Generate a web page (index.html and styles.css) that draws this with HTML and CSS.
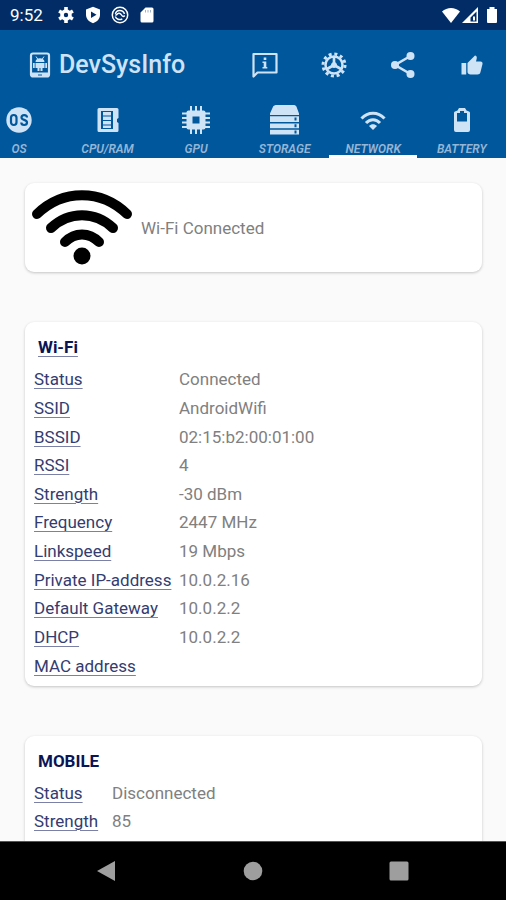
FILE: index.html
```html
<!DOCTYPE html>
<html lang="en">
<head>
<meta charset="utf-8">
<meta name="viewport" content="width=device-width, initial-scale=1">
<title>DevSysInfo</title>
<link rel="stylesheet" href="styles.css">
</head>
<body>
<div class="status-bar">
  <span class="clock">9:52</span>
  <div class="status-icons">
    <svg viewBox="0 0 18 18" width="18" height="18"><g fill="none" stroke="#fff"><circle cx="9" cy="9" r="4" stroke-width="3.6"/><path d="M9 1v3M9 14v3M2.1 5l2.6 1.5M13.3 11.5l2.6 1.5M2.1 13l2.6-1.5M13.3 6.500l2.6-1.5" stroke-width="3.6"/></g></svg>
    <svg viewBox="0 0 18 18" width="18" height="18"><path fill="#fff" d="M9 .8l7 2.700v5.300c0 4-2.800 7-7 8.500-4.200-1.500-7-4.500-7-8.500V3.500z"/><path fill="#012c66" d="M7 5.500l5.500 3.200L7 12z"/></svg>
    <svg viewBox="0 0 18 18" width="18" height="18" fill="none" stroke="#fff"><circle cx="9" cy="9" r="7.700" stroke-width="1.500"/><path d="M4.500 8C5 3.500 12 3 13.500 8M4.300 10.500c1 2.500 4 4 7 2.300M6 8.500c1-2 3.500-1.500 4.500.5s2.500 1.500 3.200.5M6 8.500c-.8.800-1.200.5-1.500 0" stroke-width="1.500"/></svg>
    <svg viewBox="0 0 18 18" width="18" height="18"><path fill="#fff" d="M7.500 1.500H14A1.500 1.500 0 0115.500 3v12a1.500 1.500 0 01-1.500 1.500H4A1.500 1.500 0 012.500 15V6.500z"/><path d="M7.500 4v2.500M10 4v2.500M12.500 4v2.500" stroke="#9fb2cc"/></svg>
  </div>
  <div class="signal-icons">
    <svg viewBox="0 0 20 18" width="20" height="18"><path fill="#fff" d="M1 5.500C6 .8 14 .8 19 5.500L10 17z"/></svg>
    <svg viewBox="0 0 18 18" width="18" height="18"><path fill="#fff" fill-rule="evenodd" d="M17 1v16H1zM15.500 5.500L9.500 11.500v4h6z"/><path fill="#fff" d="M12 10.500h2v4h-2z"/></svg>
    <svg viewBox="0 0 14 18" width="14" height="18"><path fill="#fff" d="M4.500 1h5v2H12v13a1 1 0 01-1 1H3a1 1 0 01-1-1V3h2.500z"/></svg>
  </div>
</div>
<header class="toolbar">
  <svg class="logo" viewBox="0 0 22 26" width="22" height="26"><rect x="2" y="1.500" width="18" height="23" rx="2" fill="none" stroke="#cfe3f7" stroke-width="2.200"/><path fill="#cfe3f7" d="M2 20.500h18V25H2zM6.500 10c0-5 9-5 9 0zM6.500 11h9v5h-2v3h-2v-3h-1v3h-2v-3h-2zM4 11h1.700v5H4zM16.300 11H18v5h-1.700z"/><path d="M7 4.500l2 3M15 4.500l-2 3" stroke="#cfe3f7"/><path d="M9 23h4" stroke="#01579b"/></svg>
  <h1 class="title">DevSysInfo</h1>
  <div class="actions">
    <button type="button" aria-label="Information"><svg viewBox="0 0 28 28" width="28" height="28"><path fill="none" stroke="#cfe3f7" stroke-width="2.200" stroke-linejoin="round" d="M2.500 3h23v18.500h-19l-4 4z"/><path fill="#cfe3f7" d="M12.700 6.500h2.600V9h-2.600zM11.500 10.500h3.800v5.500h1v1.500h-4.800V16h1.200v-4h-1.200z"/></svg></button>
    <button type="button" aria-label="Settings"><svg viewBox="0 0 28 28" width="28" height="28" fill="none" stroke="#cfe3f7"><circle cx="14" cy="14" r="11" stroke-width="3" stroke-dasharray="3 2.760"/><circle cx="14" cy="14" r="8.500" stroke-width="2.500"/><circle cx="14" cy="14" r="2.500" fill="#cfe3f7"/><path stroke-width="2.600" d="M14 14V6M14 14l-7 4M14 14l7 4"/></svg></button>
    <button type="button" aria-label="Share"><svg viewBox="0 0 28 28" width="28" height="28"><path fill="none" stroke="#cfe3f7" stroke-width="2.600" d="M21.500 5L6 14l15.500 9"/><g fill="#cfe3f7"><circle cx="21.500" cy="5" r="4"/><circle cx="6" cy="14" r="4"/><circle cx="21.500" cy="23" r="4"/></g></svg></button>
    <button type="button" aria-label="Like"><svg viewBox="0 0 28 28" width="28" height="28"><path fill="#cfe3f7" d="M3.500 12h4.700v11.500H3.500zM9.500 12l7.500-7.500c2.500.5 2 2.500 1 6h4.500c1.500 0 2.300 1.300 2 2.500L22.500 21c-.5 1.800-1.500 2.500-3 2.500h-7c-1.500 0-3-1-3-2.500z"/></svg></button>
  </div>
</header>
<nav class="tabs">
  <a class="tab" href="#os"><svg viewBox="0 0 32 32" width="32" height="32"><circle cx="16" cy="16" r="12.700" fill="#cfe3f7"/><g fill="none" stroke="#01579b" stroke-width="2.200"><rect x="8" y="11" width="5.500" height="10" rx="2.700"/><path d="M24 13.500c0-3.300-5.500-3.300-5.500 0 0 3 5.500 1.800 5.500 5 0 3.300-5.700 3.300-5.700 0"/></g></svg>OS</a>
  <a class="tab" href="#cpu"><svg viewBox="0 0 32 32" width="32" height="32"><path fill="#cfe3f7" fill-rule="evenodd" d="M7 4h18a1.500 1.500 0 011.500 1.500V14l-1.500 1v3l1.500 1v7.500A1.500 1.500 0 0125 28H7a1.500 1.500 0 01-1.500-1.500v-21A1.500 1.500 0 017 4zM9 7v18h12V7z"/><path fill="#cfe3f7" d="M11 8h8v3.500h-8zM11 12.500h8V16h-8zM11 17h8v3.500h-8zM11 21.500h8V24h-8z"/></svg>CPU/RAM</a>
  <a class="tab" href="#gpu"><svg viewBox="0 0 32 32" width="32" height="32"><path fill="none" stroke="#cfe3f7" stroke-width="2" d="M11 2v28M16 2v28M21 2v28M2 9.500h28M2 14h28M2 18.500h28M2 23h28"/><rect x="6.500" y="6.500" width="19" height="19" rx="2" fill="#cfe3f7"/><path fill="#01579b" d="M12.500 12.500h7v7h-7z"/></svg>GPU</a>
  <a class="tab" href="#storage"><svg viewBox="0 0 32 32" width="32" height="32"><path fill="#cfe3f7" d="M8 1h16c2 0 3 .5 3.600 2L30 9.500V11H1V9.500L3.900 3C4.500 1.500 6 1 8 1zM1 12.300h29v5.700H1zM1 19.500h29v4.700H1zM1 25.700h29v4.800H1z"/><path fill="#01579b" d="M25.500 13.500h2v3h-2zM25.500 20.300h2v3h-2zM25.500 26.500h2v3h-2z"/></svg>STORAGE</a>
  <a class="tab active" href="#network" aria-current="page"><svg viewBox="0 0 32 32" width="32" height="32"><path fill="none" stroke="#cfe3f7" stroke-width="3" d="M4.500 14.500c6.500-7 16.500-7 23 0M9 19c4-4.500 10-4.500 14 0"/><path fill="#cfe3f7" d="M12 22c2.400-2.200 5.600-2.200 8 0L16 26z"/></svg>NETWORK</a>
  <a class="tab" href="#battery"><svg viewBox="0 0 32 32" width="32" height="32"><path fill="#cfe3f7" fill-rule="evenodd" d="M13 4h6l1.500 2.500L23 7.500a1.500 1.500 0 011 1.500v17a2 2 0 01-2 2H10a2 2 0 01-2-2V9a1.500 1.500 0 011-1.500l2.500-1zM14 7v2h-3v8.500h10V9h-3V7z"/></svg>BATTERY</a>
</nav>
<main class="content">
  <section class="card summary">
    <svg viewBox="0 0 100 76" width="100" height="76"><g fill="none" stroke="#000" stroke-width="10" stroke-linecap="round"><path d="M5 24C31-1 69-1 95 24"/><path d="M19 38C37 21 63 21 81 38"/><path d="M33 52C43 42 57 42 67 52"/></g><circle cx="50" cy="66" r="8.500"/></svg>
    <p>Wi-Fi Connected</p>
  </section>
  <section class="card">
    <h2 class="underlined">Wi-Fi</h2>
    <table class="details wifi">
      <tr><th scope="row">Status</th><td>Connected</td></tr>
      <tr><th scope="row">SSID</th><td>AndroidWifi</td></tr>
      <tr><th scope="row">BSSID</th><td>02:15:b2:00:01:00</td></tr>
      <tr><th scope="row">RSSI</th><td>4</td></tr>
      <tr><th scope="row">Strength</th><td>-30 dBm</td></tr>
      <tr><th scope="row">Frequency</th><td>2447 MHz</td></tr>
      <tr><th scope="row">Linkspeed</th><td>19 Mbps</td></tr>
      <tr><th scope="row">Private IP-address</th><td>10.0.2.16</td></tr>
      <tr><th scope="row">Default Gateway</th><td>10.0.2.2</td></tr>
      <tr><th scope="row">DHCP</th><td>10.0.2.2</td></tr>
      <tr><th scope="row">MAC address</th><td></td></tr>
    </table>
  </section>
  <section class="card last">
    <h2>MOBILE</h2>
    <table class="details mobile">
      <tr><th scope="row">Status</th><td>Disconnected</td></tr>
      <tr><th scope="row">Strength</th><td>85</td></tr>
    </table>
  </section>
</main>
<footer class="nav-bar">
  <button type="button" aria-label="Back"><svg viewBox="0 0 20 22" width="20" height="22"><path fill="#9e9e9e" d="M18 1v20L0 11z"/></svg></button>
  <button type="button" aria-label="Home"><svg viewBox="0 0 20 20" width="20" height="20"><circle cx="10" cy="10" r="9.300" fill="#9e9e9e"/></svg></button>
  <button type="button" aria-label="Recent apps"><svg viewBox="0 0 20 20" width="20" height="20"><rect x=".5" y=".5" width="19" height="19" rx="1.500" fill="#9e9e9e"/></svg></button>
</footer>
</body>
</html>
```
FILE: styles.css
```css
* {
  box-sizing: border-box;
}

body {
  margin: 0;
  height: 100vh;
  display: flex;
  flex-direction: column;
  overflow: hidden;
  background: #fafafa;
  color: #808080;
  font: 17px/28px Roboto, sans-serif;
}

svg {
  display: block;
  flex: none;
}

button {
  padding: 0;
  border: 0;
  background: none;
}

h1, h2, p {
  margin: 0;
}

.status-bar {
  flex: none;
  display: flex;
  align-items: center;
  height: 30px;
  padding: 0 7px 0 10px;
  background: #012c66;
  color: #fff;
}

.clock {
  font-size: 17px;
  font-weight: 400;
}

.status-icons {
  display: flex;
  gap: 9px;
  margin-left: 14px;
}

.signal-icons {
  display: flex;
  margin-left: auto;
}

.signal-icons svg:last-child {
  margin-left: 6px;
}

.toolbar {
  flex: none;
  display: flex;
  align-items: center;
  height: 68px;
  padding: 1px 20px 0 29px;
  background: #01579b;
  color: #cfe3f7;
}

.title {
  margin-left: 8px;
  font-size: 25px;
  font-weight: 500;
}

.actions {
  display: flex;
  gap: 41px;
  margin-left: auto;
}

.tabs {
  flex: none;
  display: flex;
  justify-content: flex-end;
  height: 60px;
  overflow: hidden;
  background: #01579b;
}

.tab {
  flex: 0 0 17.5%;
  display: flex;
  flex-direction: column;
  align-items: center;
  gap: 5px;
  padding-top: 6px;
  border-bottom: 3px solid transparent;
  color: #93b6d7;
  font-size: 12px;
  line-height: 16px;
  font-style: italic;
  font-weight: 600;
  text-decoration: none;
}

.tab.active {
  border-color: #fff;
}

.content {
  flex: 1;
  min-height: 0;
  display: flex;
  flex-direction: column;
  gap: 50px;
  padding: 25px 24px 0 25px;
  overflow: hidden;
}

.card {
  flex: none;
  padding: 11px 9px 6px;
  border-radius: 9px;
  background: #fff;
  box-shadow: 0 1px 3px rgba(0, 0, 0, 0.22);
}

.card.last {
  padding-bottom: 24px;
}

.summary {
  display: flex;
  align-items: center;
  gap: 9px;
  padding: 7px 7px;
  height: 89px;
}

.card h2 {
  padding-left: 4px;
  margin-bottom: 4px;
  color: #0a1555;
  font-size: 17px;
  font-weight: 700;
}

.underlined, .details th {
  text-decoration: underline;
  text-decoration-color: #7a80a6;
  text-decoration-thickness: 1px;
  text-underline-offset: 3px;
}

.details {
  width: 100%;
  border-collapse: collapse;
  table-layout: fixed;
}

.details th, .details td {
  padding: 0;
  text-align: left;
  font-weight: 400;
  white-space: nowrap;
}

.details th {
  color: #343c70;
}

.wifi {
  height: 315px;
}

.wifi th {
  width: 145px;
}

.mobile th {
  width: 78px;
}

.nav-bar {
  flex: none;
  display: grid;
  grid-template-columns: repeat(3, 146px);
  justify-content: center;
  justify-items: center;
  align-items: center;
  height: 59px;
  border-top: 1px solid #555;
  background: #000;
}
```
